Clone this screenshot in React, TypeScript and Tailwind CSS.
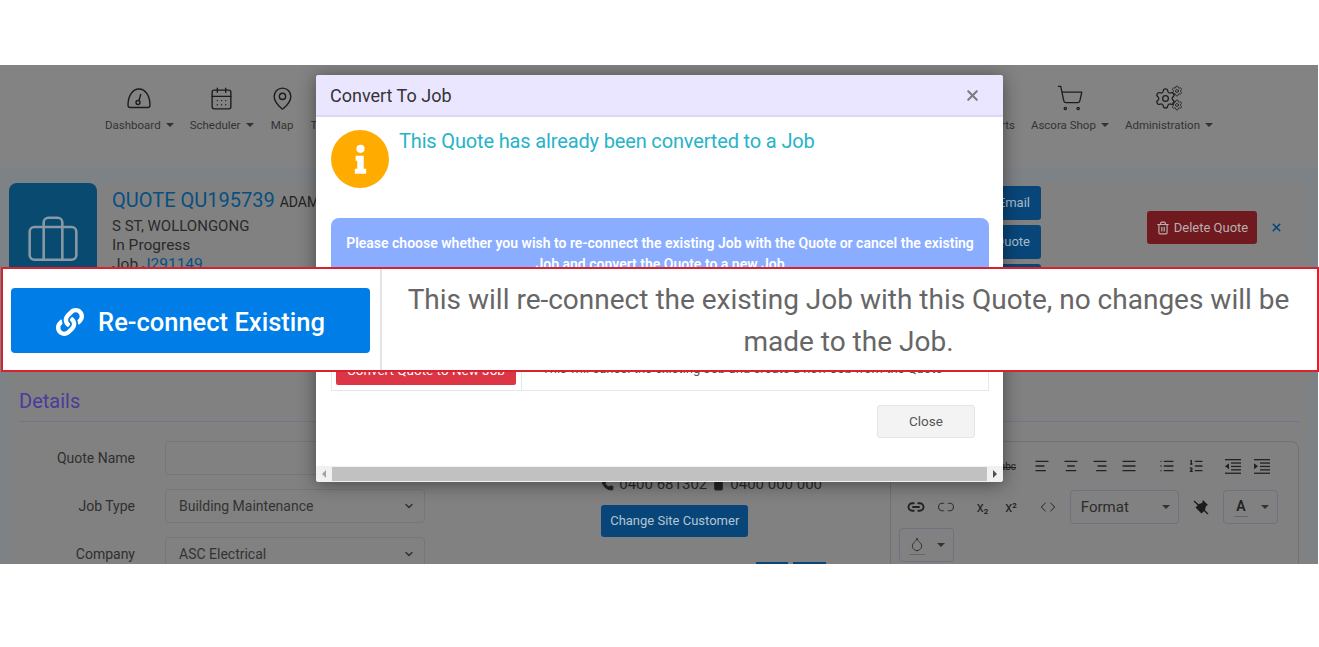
import React from 'react';
import {
  AlignCenter,
  AlignJustify,
  AlignLeft,
  AlignRight,
  Briefcase,
  CalendarDays,
  ChevronDown,
  Code,
  Droplet,
  Link2,
  List,
  ListOrdered,
  MapPin,
  Phone,
  Settings,
  ShoppingCart,
  Smartphone,
  Trash2,
  Unlink2,
  X,
} from 'lucide-react';
import { FaLink } from 'react-icons/fa';

const Caret = ({ className = '' }: { className?: string }) => (
  <span className={`inline-block w-0 h-0 border-x-[4px] border-x-transparent border-t-[4px] border-t-[#333] ${className}`} />
);

const GaugeIcon = () => (
  <svg width="28" height="24" viewBox="0 0 28 24" fill="none" stroke="#1c1c1c" strokeWidth="1.4">
    <path d="M5 21.5h18a2 2 0 0 0 2-2.2C25 10 20.5 3 14 3S3 10 3 19.3a2 2 0 0 0 2 2.2z" />
    <circle cx="13" cy="16.5" r="2" />
    <path d="M14 14.5l1.8-6.5" />
  </svg>
);

const GearsIcon = () => (
  <span className="relative block w-[29px] h-[24px]">
    <Settings size={23} strokeWidth={1.3} className="absolute left-0 top-[1px] text-[#1c1c1c]" />
    <Settings size={12} strokeWidth={1.6} className="absolute right-0 -top-[1px] text-[#1c1c1c]" />
    <Settings size={12} strokeWidth={1.6} className="absolute right-0 -bottom-[1px] text-[#1c1c1c]" />
  </span>
);

const ClearFormatIcon = () => (
  <svg width="18" height="18" viewBox="0 0 18 18" fill="#1c1c1c">
    <path d="M11 2l5 5-2 1-1 4-3.5 3.5L3.5 9.5 7 6l3-1z" />
    <path d="M2 3l14 13" stroke="#1c1c1c" strokeWidth="1.4" />
  </svg>
);

const InfoGlyph = () => (
  <svg width="13" height="30" viewBox="0 0 16 36" fill="#fff">
    <circle cx="8" cy="5.5" r="5" />
    <path d="M2 14h10v16h3v6H1v-6h3V20H2z" />
  </svg>
);

// outdent / indent: text lines with a small filled arrow
const IndentIcon = ({ flip }: { flip?: boolean }) => (
  <svg width="16" height="15" viewBox="0 0 16 15" fill="#222">
    <rect x="0" y="0" width="16" height="1.3" />
    <rect x="6" y="3.4" width="10" height="1.3" />
    <rect x="6" y="6.8" width="10" height="1.3" />
    <rect x="6" y="10.2" width="10" height="1.3" />
    <rect x="0" y="13.6" width="16" height="1.3" />
    {flip ? <path d="M0 4.2v6l4-3z" /> : <path d="M4 4.2v6l-4-3z" />}
  </svg>
);

const NavItem = ({ icon, label, caret }: { icon: React.ReactNode; label: string; caret?: boolean }) => (
  <div className="flex flex-col items-center gap-[4px]">
    <div className="h-[30px] flex items-center justify-center">{icon}</div>
    <div className="flex items-center gap-[5px] text-[11.5px] leading-[16px] text-[#333] whitespace-nowrap">
      {label}
      {caret && <Caret />}
    </div>
  </div>
);

const FormRow = ({ label, value, select }: { label: string; value?: string; select?: boolean }) => (
  <div className="flex items-center gap-[30px] h-[34px]">
    <div className="w-[116px] text-right text-[14px] text-[#2f2f2f]">{label}</div>
    <div className="w-[260px] h-[34px] flex items-center justify-between px-[13px] border border-[#767676] rounded-[4px] text-[14px] text-[#333]">
      <span>{value}</span>
      {select && <ChevronDown size={12} strokeWidth={3} className="text-[#333] -mr-[4px]" />}
    </div>
  </div>
);

const Tool = ({ children }: { children: React.ReactNode }) => (
  <span className="w-[22px] h-[20px] flex items-center justify-center text-[#222]">{children}</span>
);

function NavBar() {
  return (
    <div className="h-[103px] shrink-0 flex justify-between px-[105px] pt-[18px] bg-[#838383]">
      <div className="flex gap-[16px]">
        <NavItem icon={<GaugeIcon />} label="Dashboard" caret />
        <NavItem icon={<CalendarDays size={25} strokeWidth={1.3} className="text-[#1c1c1c]" />} label="Scheduler" caret />
        <NavItem icon={<MapPin size={25} strokeWidth={1.3} className="text-[#1c1c1c]" />} label="Map" />
        <NavItem icon={<span />} label="Tasks" />
      </div>
      <div className="flex gap-[16px]">
        <NavItem icon={<span />} label="Reports" />
        <NavItem icon={<ShoppingCart size={28} strokeWidth={1.1} className="text-[#1c1c1c]" />} label="Ascora Shop" caret />
        <NavItem icon={<GearsIcon />} label="Administration" caret />
      </div>
    </div>
  );
}

function QuoteCard() {
  return (
    <div className="h-[204px] shrink-0 flex rounded-t-[8px] bg-[#818181]">
      <div className="w-[88px] h-[130px] rounded-[8px] bg-[#084a70] flex items-center justify-center pb-[14px]">
        <Briefcase size={56} strokeWidth={1.1} className="text-[#8a98a3]" />
      </div>
      <div className="ml-[15px] pt-[5px] flex-1">
        <div className="flex items-baseline gap-[5px]">
          <span className="text-[20px] leading-[24px] text-[#084f80]">QUOTE QU195739</span>
          <span className="text-[14px] text-[#222]">ADAM</span>
        </div>
        <div className="mt-[3px] text-[15px] leading-[20px] text-[#2a2a2a]">S ST, WOLLONGONG</div>
        <div className="text-[15.5px] leading-[19px] text-[#2a2a2a]">In Progress</div>
        <div className="text-[15.5px] leading-[19px] text-[#2a2a2a]">
          Job <span className="text-[#084f80]">J291149</span>
        </div>
      </div>
      <div className="w-[161px] pt-[3px] flex flex-col gap-[5px]">
        {['Email', 'Quote', ''].map((b) => (
          <div key={b} className="h-[34px] rounded-[3px] bg-[#084679] flex items-center justify-end pr-[11px] text-[13px] text-[#a9bccb]">
            {b}
          </div>
        ))}
      </div>
      <div className="w-[268px] pl-[106px] pt-[28px] flex items-start gap-[13px]">
        <div className="w-[110px] h-[33px] shrink-0 rounded-[3px] bg-[#701a20] flex items-center justify-center gap-[4px] text-[13px] text-[#b9b0b0]">
          <Trash2 size={14} />
          Delete Quote
        </div>
        <X size={13} strokeWidth={3} className="text-[#084679] mt-[10px] shrink-0" />
      </div>
    </div>
  );
}

function Editor() {
  return (
    <div className="w-[410px] h-[130px] border border-[#717171] rounded-[8px] px-[5px] pt-[13px]">
      <div className="flex items-center justify-end h-[22px] pr-[20px] gap-[7px]">
        <span className="text-[10px] line-through text-[#222] mr-[8px]">abc</span>
        <Tool><AlignLeft size={16} /></Tool>
        <Tool><AlignCenter size={16} /></Tool>
        <Tool><AlignRight size={16} /></Tool>
        <Tool><AlignJustify size={16} /></Tool>
        <span className="w-[2px]" />
        <Tool><List size={16} /></Tool>
        <Tool><ListOrdered size={16} /></Tool>
        <span className="w-[1px]" />
        <Tool><IndentIcon /></Tool>
        <Tool><IndentIcon flip /></Tool>
      </div>
      <div className="flex items-center h-[34px] mt-[13px] pl-[11px]">
        <Link2 size={18} strokeWidth={2.5} className="text-[#222]" />
        <Unlink2 size={18} strokeWidth={1.5} className="text-[#333] ml-[12px]" />
        <span className="ml-[22px] text-[14px] text-[#222]">x<sub className="text-[8px] font-bold">2</sub></span>
        <span className="ml-[17px] text-[14px] text-[#222]">x<sup className="text-[8px] font-bold">2</sup></span>
        <Code size={16} strokeWidth={1.5} className="text-[#222] ml-[23px]" />
        <div className="ml-[14px] w-[109px] h-[34px] border border-[#6f7080] rounded-[4px] flex items-center justify-between pl-[10px] pr-[8px] text-[15px] text-[#2c2c2c]">
          Format
          <Caret />
        </div>
        <span className="ml-[13px]"><ClearFormatIcon /></span>
        <div className="ml-[13px] w-[55px] h-[34px] border border-[#6f7080] rounded-[4px] flex items-center justify-between pl-[10px] pr-[8px]">
          <span className="w-[14px] text-center text-[14px] font-semibold leading-[16px] border-b border-[#666] pb-[2px] text-[#222]">A</span>
          <Caret />
        </div>
      </div>
      <div className="mt-[4px] ml-[3px] w-[55px] h-[34px] border border-[#6f7080] rounded-[4px] flex items-center justify-between pl-[9px] pr-[8px]">
        <span className="border-b border-[#666] pb-[2px]">
          <Droplet size={16} strokeWidth={1.2} className="text-[#222]" />
        </span>
        <Caret />
      </div>
    </div>
  );
}

function Details() {
  return (
    <div className="px-[10px] bg-[#818181] flex-1">
      <div className="text-[20px] leading-[28px] text-[#4a3b9c] pb-[6px] border-b border-[#72748c]">Details</div>
      <div className="flex mt-[19px]">
        <div className="flex flex-col gap-[14px] w-[430px]">
          <FormRow label="Quote Name" />
          <FormRow label="Job Type" value="Building Maintenance" select />
          <FormRow label="Company" value="ASC Electrical" select />
        </div>
        <div className="w-[442px] pl-[153px] pt-[33px]">
          <div className="flex items-center gap-[5px] text-[15px] leading-[20px] text-[#2a2a2a] whitespace-nowrap">
            <Phone size={13} fill="#222" /> 0400 681302 <Smartphone size={13} fill="#222" /> 0400 000 000
          </div>
          <div className="mt-[11px] w-[147px] h-[32px] rounded-[3px] bg-[#084679] flex items-center justify-center text-[13px] text-[#b4c5d2]">
            Change Site Customer
          </div>
          <div className="mt-[25px] ml-[155px] flex gap-[5px]">
            <span className="w-[32px] h-[10px] bg-[#084679]" />
            <span className="w-[33px] h-[10px] bg-[#084679]" />
          </div>
        </div>
        <Editor />
      </div>
    </div>
  );
}

function ConvertModal() {
  return (
    <div className="absolute left-[316px] top-[10px] w-[687px] h-[407px] bg-white rounded-[3px] shadow-[0_2px_18px_rgba(0,0,0,0.45)] flex flex-col overflow-hidden">
      <div className="h-[42px] shrink-0 bg-[#ebe6ff] border-b-2 border-[#ddd6fb] flex items-center justify-between pl-[14px] pr-[22px]">
        <span className="text-[18px] text-[#333]">Convert To Job</span>
        <X size={17} strokeWidth={3} className="text-[#7d7d85]" />
      </div>
      <div className="flex-1 pl-[15px] pr-[14px] pt-[13px]">
        <div className="flex gap-[10px] h-[88px]">
          <div className="w-[58px] h-[58px] rounded-full bg-[#ffab00] flex items-center justify-center">
            <InfoGlyph />
          </div>
          <div className="text-[20px] leading-[22px] tracking-[-0.15px] text-[#27b3c8]">This Quote has already been converted to a Job</div>
        </div>
        <div className="h-[70px] rounded-[8px] bg-[#8aadff] px-[14px] pt-[15px] text-center text-[14px] leading-[21px] font-semibold text-white">
          Please choose whether you wish to re-connect the existing Job with the Quote or cancel the existing Job and convert the Quote to a new Job
        </div>
        <div className="mt-[14px] border border-[#e6e6ee] text-[13px] text-[#555]">
          <div className="flex h-[44px] border-b border-[#e6e6ee]">
            <div className="w-[190px] border-r border-[#e6e6ee]" />
          </div>
          <div className="flex h-[43px]">
            <div className="w-[190px] shrink-0 border-r border-[#e6e6ee] pl-[4px] pb-[5px] flex">
              <div className="w-[180px] h-full rounded-[2px] bg-[#dc3545] flex items-center justify-center pt-[8px] text-[13.5px] text-white">Convert Quote to New Job</div>
            </div>
            <div className="flex-1 px-[20px] pt-[14px] leading-[15px]">This will cancel the existing Job and create a new Job from the Quote</div>
          </div>
        </div>
        <div className="mt-[14px] flex justify-end pr-[14px]">
          <div className="w-[98px] h-[33px] rounded-[3px] bg-[#f3f3f3] border border-[#e4e4e4] flex items-center justify-center text-[13.5px] text-[#555]">Close</div>
        </div>
      </div>
      <div className="h-[16px] shrink-0 bg-[#f1f1f1] flex items-center">
        <span className="w-[16px] flex justify-center">
          <span className="w-0 h-0 border-y-[4px] border-y-transparent border-r-[4px] border-r-[#a3a3a3]" />
        </span>
        <div className="flex-1 h-[14px] bg-[#c1c1c1]" />
        <span className="w-[16px] flex justify-center">
          <span className="w-0 h-0 border-y-[4px] border-y-transparent border-l-[4px] border-l-[#505050]" />
        </span>
      </div>
    </div>
  );
}

function Callout() {
  return (
    <div className="absolute left-[1px] top-[267px] w-[1318px] h-[105px] bg-white border-2 border-[#d7222f] flex items-stretch">
      <div className="w-[379px] shrink-0 border-r-2 border-[#e3e3ea] pl-[8px] pt-[19px]">
        <div className="w-[359px] h-[65px] rounded-[4px] bg-[#007de6] flex items-center justify-center gap-[14px] pt-[3px] text-[25.5px] font-medium text-white">
          <FaLink size={28} />
          Re-connect Existing
        </div>
      </div>
      <div className="flex-1 flex items-center justify-center pl-[18px] pr-[20px] pt-[2px] text-center text-[28px] leading-[42px] text-[#666]">
        <span>
          This will re-connect the existing Job with this Quote, no changes will be
          <br />
          made to the Job.
        </span>
      </div>
    </div>
  );
}

export default function App() {
  return (
    <div className="relative w-[1319px] h-[647px] overflow-hidden bg-white font-['Roboto',sans-serif]">
      <div className="h-[65px]" />
      <div className="relative h-[499px] w-[1318px] overflow-hidden bg-[#7d8286] flex flex-col">
        <NavBar />
        <div className="flex-1 flex flex-col mx-[9px] mt-[15px] overflow-hidden">
          <QuoteCard />
          <Details />
        </div>
        <ConvertModal />
      </div>
      <Callout />
    </div>
  );
}
